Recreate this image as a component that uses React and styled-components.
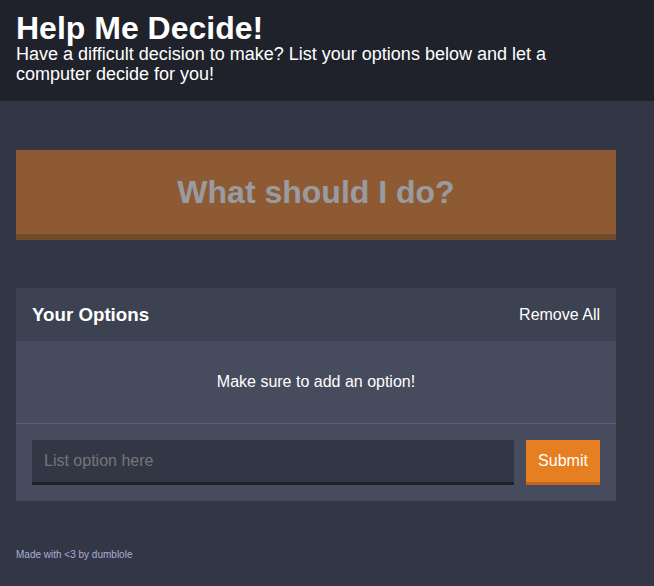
import React from 'react'
import styled, { createGlobalStyle } from 'styled-components'

const GlobalStyle = createGlobalStyle`
  * {
    box-sizing: border-box;
  }
  html, body {
    margin: 0;
    padding: 0;
  }
  body {
    background-color: #333745;
    color: #ffffff;
    font-family: "Liberation Sans", Arial, Helvetica, sans-serif;
    min-height: 586px;
  }
`

const Container = styled.div`
  max-width: 632px;
  padding: 0 16px;
`

const Header = styled.header`
  background-color: #20222b;
  padding: 12px 0 17px;
`

const Title = styled.h1`
  font-size: 32px;
  line-height: 32px;
  font-weight: 700;
  margin: 0;
`

const Subtitle = styled.h2`
  font-size: 18px;
  line-height: 20px;
  font-weight: 400;
  margin: 0;
  max-width: 560px;
`

const Main = styled.main`
  padding-top: 49px;
`

const BigButton = styled.button`
  display: block;
  width: 100%;
  height: 90px;
  background-color: #e67e22;
  border: none;
  border-bottom: 6px solid #b15d14;
  color: #ffffff;
  font-family: inherit;
  font-size: 32px;
  font-weight: 700;
  opacity: 0.5;
  padding: 0;
  margin: 0 0 48px;
  cursor: not-allowed;
`

const Widget = styled.section`
  background-color: #464b5e;
`

const WidgetHeader = styled.div`
  display: flex;
  align-items: center;
  justify-content: space-between;
  height: 53px;
  padding: 0 16px;
  background-color: #3c4251;
`

const WidgetTitle = styled.h3`
  font-size: 18.72px;
  font-weight: 700;
  margin: 0;
`

const LinkButton = styled.button`
  background: none;
  border: none;
  padding: 0;
  color: #ffffff;
  font-family: inherit;
  font-size: 16px;
`

const Message = styled.p`
  margin: 0;
  height: 83px;
  display: flex;
  align-items: center;
  justify-content: center;
  font-size: 16px;
  border-bottom: 1px solid #596075;
`

const Form = styled.form`
  display: flex;
  gap: 12px;
  padding: 16px;
`

const Input = styled.input`
  flex: 1;
  height: 45px;
  background-color: #333745;
  border: none;
  border-bottom: 3px solid #20222b;
  color: #a5afd7;
  font-family: inherit;
  font-size: 16px;
  padding: 0 12px;
  outline: none;

  ::placeholder {
    color: #6f737f;
  }
`

const Submit = styled.button`
  height: 45px;
  width: 74px;
  background-color: #e67e22;
  border: none;
  border-bottom: 3px solid #c2651a;
  color: #ffffff;
  font-family: inherit;
  font-size: 16px;
  padding: 0;
`

const Footer = styled.footer`
  padding-top: 48px;
  font-size: 10px;
  color: #a5afd7;
`

const App = () => {
  return (
    <>
      <GlobalStyle />
      <Header>
        <Container>
          <Title>Help Me Decide!</Title>
          <Subtitle>Have a difficult decision to make? List your options below and let a computer decide for you!</Subtitle>
        </Container>
      </Header>
      <Main>
        <Container>
          <BigButton disabled>What should I do?</BigButton>
          <Widget>
            <WidgetHeader>
              <WidgetTitle>Your Options</WidgetTitle>
              <LinkButton>Remove All</LinkButton>
            </WidgetHeader>
            <Message>Make sure to add an option!</Message>
            <Form onSubmit={e => e.preventDefault()}>
              <Input type='text' placeholder='List option here' />
              <Submit>Submit</Submit>
            </Form>
          </Widget>
          <Footer>Made with &lt;3 by dumblole</Footer>
        </Container>
      </Main>
    </>
  )
}

export default App
